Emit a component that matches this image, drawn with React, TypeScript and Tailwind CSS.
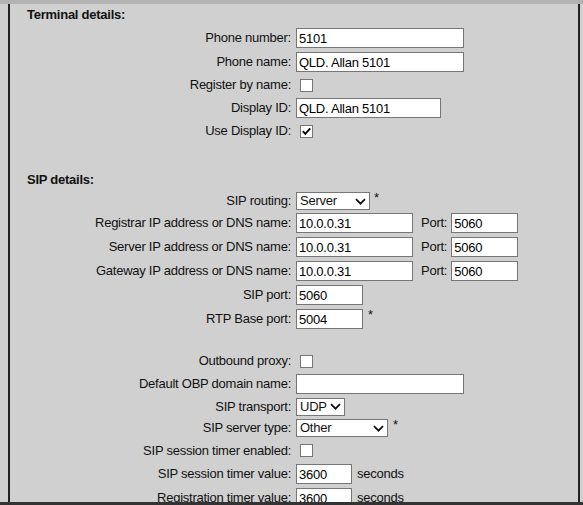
import React from "react";

type RowProps = {
  label: string;
  h: string;
  children?: React.ReactNode;
};

function Row({ label, h, children }: RowProps) {
  return (
    <div className={`flex items-center ${h}`}>
      <div className="w-[281px] shrink-0 text-right whitespace-nowrap">{label}</div>
      <div className="ml-[5px] flex items-center whitespace-nowrap">{children}</div>
    </div>
  );
}

function Heading({ children, h }: { children: React.ReactNode; h: string }) {
  return <div className={`flex items-center pl-[17px] font-bold ${h}`}>{children}</div>;
}

function TextBox({ value, w }: { value: string; w: string }) {
  return (
    <input
      readOnly
      defaultValue={value}
      className={`h-[20px] ${w} border border-[#767676] bg-white px-[2px] text-[13px] tracking-[-0.25px] text-black outline-none`}
    />
  );
}

function Check({ checked }: { checked?: boolean }) {
  return (
    <span className="ml-[4px] flex h-[13px] w-[13px] items-center justify-center border border-[#767676] bg-white">
      {checked && (
        <svg width="11" height="11" viewBox="0 0 11 11">
          <path d="M1.8 5.2 L4.3 7.8 L9.2 2.4" fill="none" stroke="#000" strokeWidth="1.9" />
        </svg>
      )}
    </span>
  );
}

function Dropdown({ value, w }: { value: string; w: string }) {
  return (
    <div className={`flex h-[18px] ${w} items-center justify-between border border-[#767676] bg-white pl-[3px] pr-[3px]`}>
      <span>{value}</span>
      <svg width="11" height="7" viewBox="0 0 11 7">
        <path d="M1 1.2 L5.5 5.7 L10 1.2" fill="none" stroke="#111" strokeWidth="1.8" />
      </svg>
    </div>
  );
}

function Star({ ml }: { ml: string }) {
  return <span className={`${ml} self-start leading-[12px]`}>*</span>;
}

export default function App() {
  return (
    <div className="flex h-[505px] w-[583px] flex-col overflow-hidden bg-[#d0d0d0] font-['Liberation_Sans',Arial,sans-serif] text-[13px] tracking-[-0.25px] text-[#111]">
      <div className="h-[4px] shrink-0 bg-[#b3b3b3]" />

      <div className="ml-[8px] w-[572px] flex-1 overflow-hidden border-x-2 border-[#222]">
        <Heading h="h-[22px]">Terminal details:</Heading>
        <Row label="Phone number:" h="h-[24px]">
          <TextBox value="5101" w="w-[168px]" />
        </Row>
        <Row label="Phone name:" h="h-[24px]">
          <TextBox value="QLD. Allan 5101" w="w-[168px]" />
        </Row>
        <Row label="Register by name:" h="h-[22px]">
          <Check />
        </Row>
        <Row label="Display ID:" h="h-[24px]">
          <TextBox value="QLD. Allan 5101" w="w-[145px]" />
        </Row>
        <Row label="Use Display ID:" h="h-[22px]">
          <Check checked />
        </Row>

        <div className="h-[27px]" />

        <Heading h="h-[22px]">SIP details:</Heading>
        <Row label="SIP routing:" h="h-[20px]">
          <Dropdown value="Server" w="w-[74px]" />
          <Star ml="ml-[4px]" />
        </Row>
        <Row label="Registrar IP address or DNS name:" h="h-[24px]">
          <TextBox value="10.0.0.31" w="w-[117px]" />
          <span className="ml-[8px]">Port:</span>
          <span className="ml-[4px] flex">
            <TextBox value="5060" w="w-[67px]" />
          </span>
        </Row>
        <Row label="Server IP address or DNS name:" h="h-[24px]">
          <TextBox value="10.0.0.31" w="w-[117px]" />
          <span className="ml-[8px]">Port:</span>
          <span className="ml-[4px] flex">
            <TextBox value="5060" w="w-[67px]" />
          </span>
        </Row>
        <Row label="Gateway IP address or DNS name:" h="h-[24px]">
          <TextBox value="10.0.0.31" w="w-[117px]" />
          <span className="ml-[8px]">Port:</span>
          <span className="ml-[4px] flex">
            <TextBox value="5060" w="w-[67px]" />
          </span>
        </Row>
        <Row label="SIP port:" h="h-[24px]">
          <TextBox value="5060" w="w-[67px]" />
        </Row>
        <Row label="RTP Base port:" h="h-[24px]">
          <TextBox value="5004" w="w-[67px]" />
          <Star ml="ml-[5px]" />
        </Row>

        <div className="h-[19px]" />

        <Row label="Outbound proxy:" h="h-[22px]">
          <Check />
        </Row>
        <Row label="Default OBP domain name:" h="h-[24px]">
          <TextBox value="" w="w-[168px]" />
        </Row>
        <Row label="SIP transport:" h="h-[21px]">
          <Dropdown value="UDP" w="w-[49px]" />
        </Row>
        <Row label="SIP server type:" h="h-[22px]">
          <Dropdown value="Other" w="w-[92px]" />
          <Star ml="ml-[5px]" />
        </Row>
        <Row label="SIP session timer enabled:" h="h-[23px]">
          <Check />
        </Row>
        <Row label="SIP session timer value:" h="h-[24px]">
          <TextBox value="3600" w="w-[56px]" />
          <span className="ml-[5px]">seconds</span>
        </Row>
        <Row label="Registration timer value:" h="h-[24px]">
          <TextBox value="3600" w="w-[56px]" />
          <span className="ml-[5px]">seconds</span>
        </Row>
      </div>

      <div className="h-[3px] shrink-0 bg-[#333]" />
    </div>
  );
}
